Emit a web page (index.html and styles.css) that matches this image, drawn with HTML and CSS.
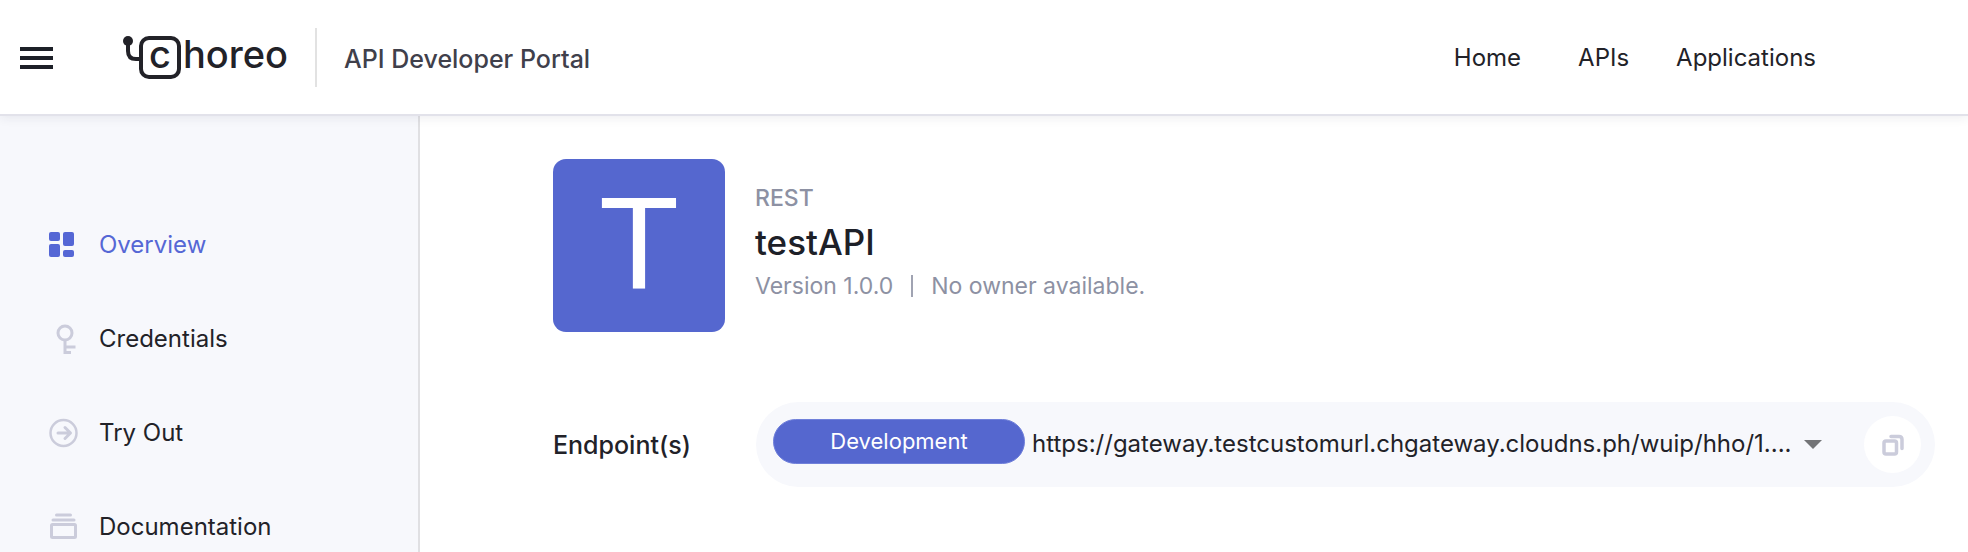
FILE: index.html
```html
<!DOCTYPE html>
<html lang="en">
<head>
<meta charset="utf-8">
<meta name="viewport" content="width=device-width, initial-scale=1">
<title>testAPI - API Developer Portal</title>
<link rel="stylesheet" href="styles.css">
</head>
<body>
<header class="topbar">
  <button class="menu-button" type="button" aria-label="Open menu">
    <svg width="33" height="22" viewBox="0 0 33 22" aria-hidden="true"><path d="M0 2h33M0 11h33M0 20h33" stroke="#1d2028" stroke-width="4"/></svg>
  </button>
  <a class="brand" href="#">
    <svg width="170" height="58" viewBox="0 -7 170 58" role="img" aria-label="choreo">
      <g fill="none" stroke="#222228" stroke-width="4">
        <rect x="18" y="2" width="38" height="39" rx="8"/>
        <path d="M5 5v10q0 8 8 8h5"/>
      </g>
      <circle cx="5" cy="5" r="5" fill="#222228"/>
      <text class="brand-text" x="26" y="32">c</text>
      <text class="brand-text" x="60" y="32">horeo</text>
    </svg>
  </a>
  <p class="portal-name">API Developer Portal</p>
  <nav class="main-nav" aria-label="Main">
    <a href="#">Home</a>
    <a href="#">APIs</a>
    <a href="#">Applications</a>
  </nav>
</header>
<div class="layout">
  <nav class="sidebar" aria-label="API">
    <a class="side-link active" href="#" aria-current="page">
      <svg width="30" height="30" viewBox="0 0 30 30" aria-hidden="true" fill="currentColor"><rect x="1" y="2" width="11" height="9" rx="2"/><rect x="1" y="14" width="11" height="13" rx="2"/><rect x="15" y="2" width="11" height="14" rx="2"/><rect x="15" y="20" width="11" height="7" rx="2"/></svg>
      <span>Overview</span>
    </a>
    <a class="side-link" href="#">
      <svg width="30" height="30" viewBox="0 0 30 30" aria-hidden="true" fill="none" stroke="currentColor" stroke-width="3"><circle cx="17" cy="9" r="7"/><path d="M17 16v14M17 23h10.500M17 28.500h6"/></svg>
      <span>Credentials</span>
    </a>
    <a class="side-link" href="#">
      <svg width="30" height="30" viewBox="0 0 30 30" aria-hidden="true" fill="none" stroke="currentColor" stroke-width="2.500" stroke-linecap="round" stroke-linejoin="round"><circle cx="15.500" cy="15" r="13"/><path d="M10 15h12M17 9.500l5.500 5.500-5.500 5.500" stroke-width="3"/></svg>
      <span>Try Out</span>
    </a>
    <a class="side-link" href="#">
      <svg width="30" height="30" viewBox="0 0 30 30" aria-hidden="true" fill="none" stroke="currentColor" stroke-width="3" stroke-linecap="round"><path d="M8.500 3h14M5 8h21"/><rect x="3.500" y="12.500" width="24" height="13" rx="1"/></svg>
      <span>Documentation</span>
    </a>
  </nav>
  <main class="content">
    <section class="api-head">
      <div class="api-thumb" aria-hidden="true">T</div>
      <div class="api-info">
        <p class="api-type">REST</p>
        <h1 class="api-name">testAPI</h1>
        <p class="api-meta"><span>Version 1.0.0</span><span class="meta-next">No owner available.</span></p>
      </div>
    </section>
    <section class="endpoint-row">
      <label class="endpoint-label" for="endpoint">Endpoint(s)</label>
      <div class="endpoint-bar">
        <span class="env-chip">Development</span>
        <div class="select-wrap">
          <select class="endpoint-select" id="endpoint">
            <option>https://gateway.testcustomurl.chgateway.cloudns.ph/wuip/hho/1....</option>
          </select>
          <svg class="caret" width="18" height="9" viewBox="0 0 18 9" aria-hidden="true"><path d="M0 0h18L9 9z" fill="#737477"/></svg>
        </div>
        <button class="copy-button" type="button" aria-label="Copy endpoint">
          <svg width="24" height="24" viewBox="0 0 24 24" aria-hidden="true" fill="none" stroke="#cbccdb" stroke-width="3.500" stroke-linecap="round"><rect x="3" y="8" width="12.500" height="13" rx="2"/><path d="M10 3.500h8q3 0 3 3v9"/></svg>
        </button>
      </div>
    </section>
  </main>
</div>
</body>
</html>
```
FILE: styles.css
```css
* { box-sizing: border-box; }
body {
  margin: 0;
  min-height: 100vh;
  display: flex;
  flex-direction: column;
  overflow-x: hidden;
  background: #fff;
  color: #222228;
  font: 400 24px/32px Inter, "Open Sans", sans-serif;
}
p, h1 { margin: 0; }
a { color: inherit; text-decoration: none; }
button { border: 0; padding: 0; background: none; cursor: pointer; }
svg { display: block; flex: none; }

.topbar {
  display: flex;
  align-items: center;
  padding: 28px 152px 27px 20px;
  border-bottom: 2px solid #e2e2ea;
  box-shadow: 0 2px 10px rgba(40, 40, 60, 0.08);
  position: relative;
  z-index: 1;
  background: #fff;
}
.brand { margin-left: 70px; }
.brand-text {
  font: 500 38px Inter, sans-serif;
  fill: #222228;
}
.portal-name {
  margin-left: 22px;
  padding: 15px 0 12px 27px;
  border-left: 2px solid #e2e2e2;
  color: #40404b;
  font-size: 25px;
  font-weight: 500;
}
.main-nav {
  display: flex;
  margin-left: auto;
}
.main-nav a + a { margin-left: 57px; }
.main-nav a + a + a { margin-left: 47px; }

.layout { display: flex; flex: 1; }
.sidebar {
  width: 420px;
  flex: none;
  padding-top: 82px;
  border-right: 2px solid #e0e0e3;
  background: #f7f8fc;
  max-height: calc(100vh - 116px);
  overflow: hidden;
}
.side-link {
  display: flex;
  align-items: center;
  gap: 21px;
  height: 94px;
  padding-left: 48px;
}
.side-link svg { color: #cbccdb; }
.side-link.active, .side-link.active svg { color: #5567d5; }

.content {
  flex: 1;
  min-width: 0;
  padding: 43px 33px 0 133px;
}
.api-head { display: flex; gap: 30px; }
.api-thumb {
  width: 172px;
  height: 173px;
  flex: none;
  border-radius: 13px;
  background: #5567cf;
  color: #fff;
  font: 131px/169px "Liberation Sans", sans-serif;
  text-align: center;
}
.api-info { padding-top: 23px; }
.api-type {
  color: #8d91a3;
  font-size: 23px;
  font-weight: 500;
}
.api-name {
  color: #1d2028;
  font-size: 35px;
  font-weight: 500;
  line-height: 56px;
}
.api-meta {
  display: flex;
  align-items: center;
  color: #8d91a3;
  font-size: 23px;
}
.meta-next {
  margin-left: 18px;
  padding-left: 18px;
  border-left: 2px solid #a0a3b2;
  line-height: 22px;
}

.endpoint-row {
  display: flex;
  align-items: center;
  margin-top: 70px;
}
.endpoint-label {
  width: 203px;
  flex: none;
  font-size: 25px;
  font-weight: 500;
}
.endpoint-bar {
  display: flex;
  align-items: center;
  flex: 1;
  min-width: 0;
  min-height: 85px;
  padding: 14px 14px 14px 17px;
  border-radius: 43px;
  background: #f7f8fc;
}
.env-chip {
  width: 252px;
  flex: none;
  margin-bottom: 6px;
  border: 1px solid #7080da;
  border-radius: 23px;
  background: #5567cf;
  color: #fff;
  font-size: 22px;
  line-height: 43px;
  text-align: center;
}
.select-wrap {
  display: flex;
  align-items: center;
  flex: 1;
  min-width: 0;
  gap: 12px;
  margin: 0 42px 0 7px;
}
.endpoint-select {
  appearance: none;
  flex: 1;
  min-width: 0;
  padding: 0 0 2px;
  border: 0;
  background: transparent;
  color: #222228;
  font: inherit;
}
.copy-button {
  display: grid;
  place-items: center;
  width: 57px;
  height: 57px;
  flex: none;
  border-radius: 50%;
  background: #fff;
}
```
